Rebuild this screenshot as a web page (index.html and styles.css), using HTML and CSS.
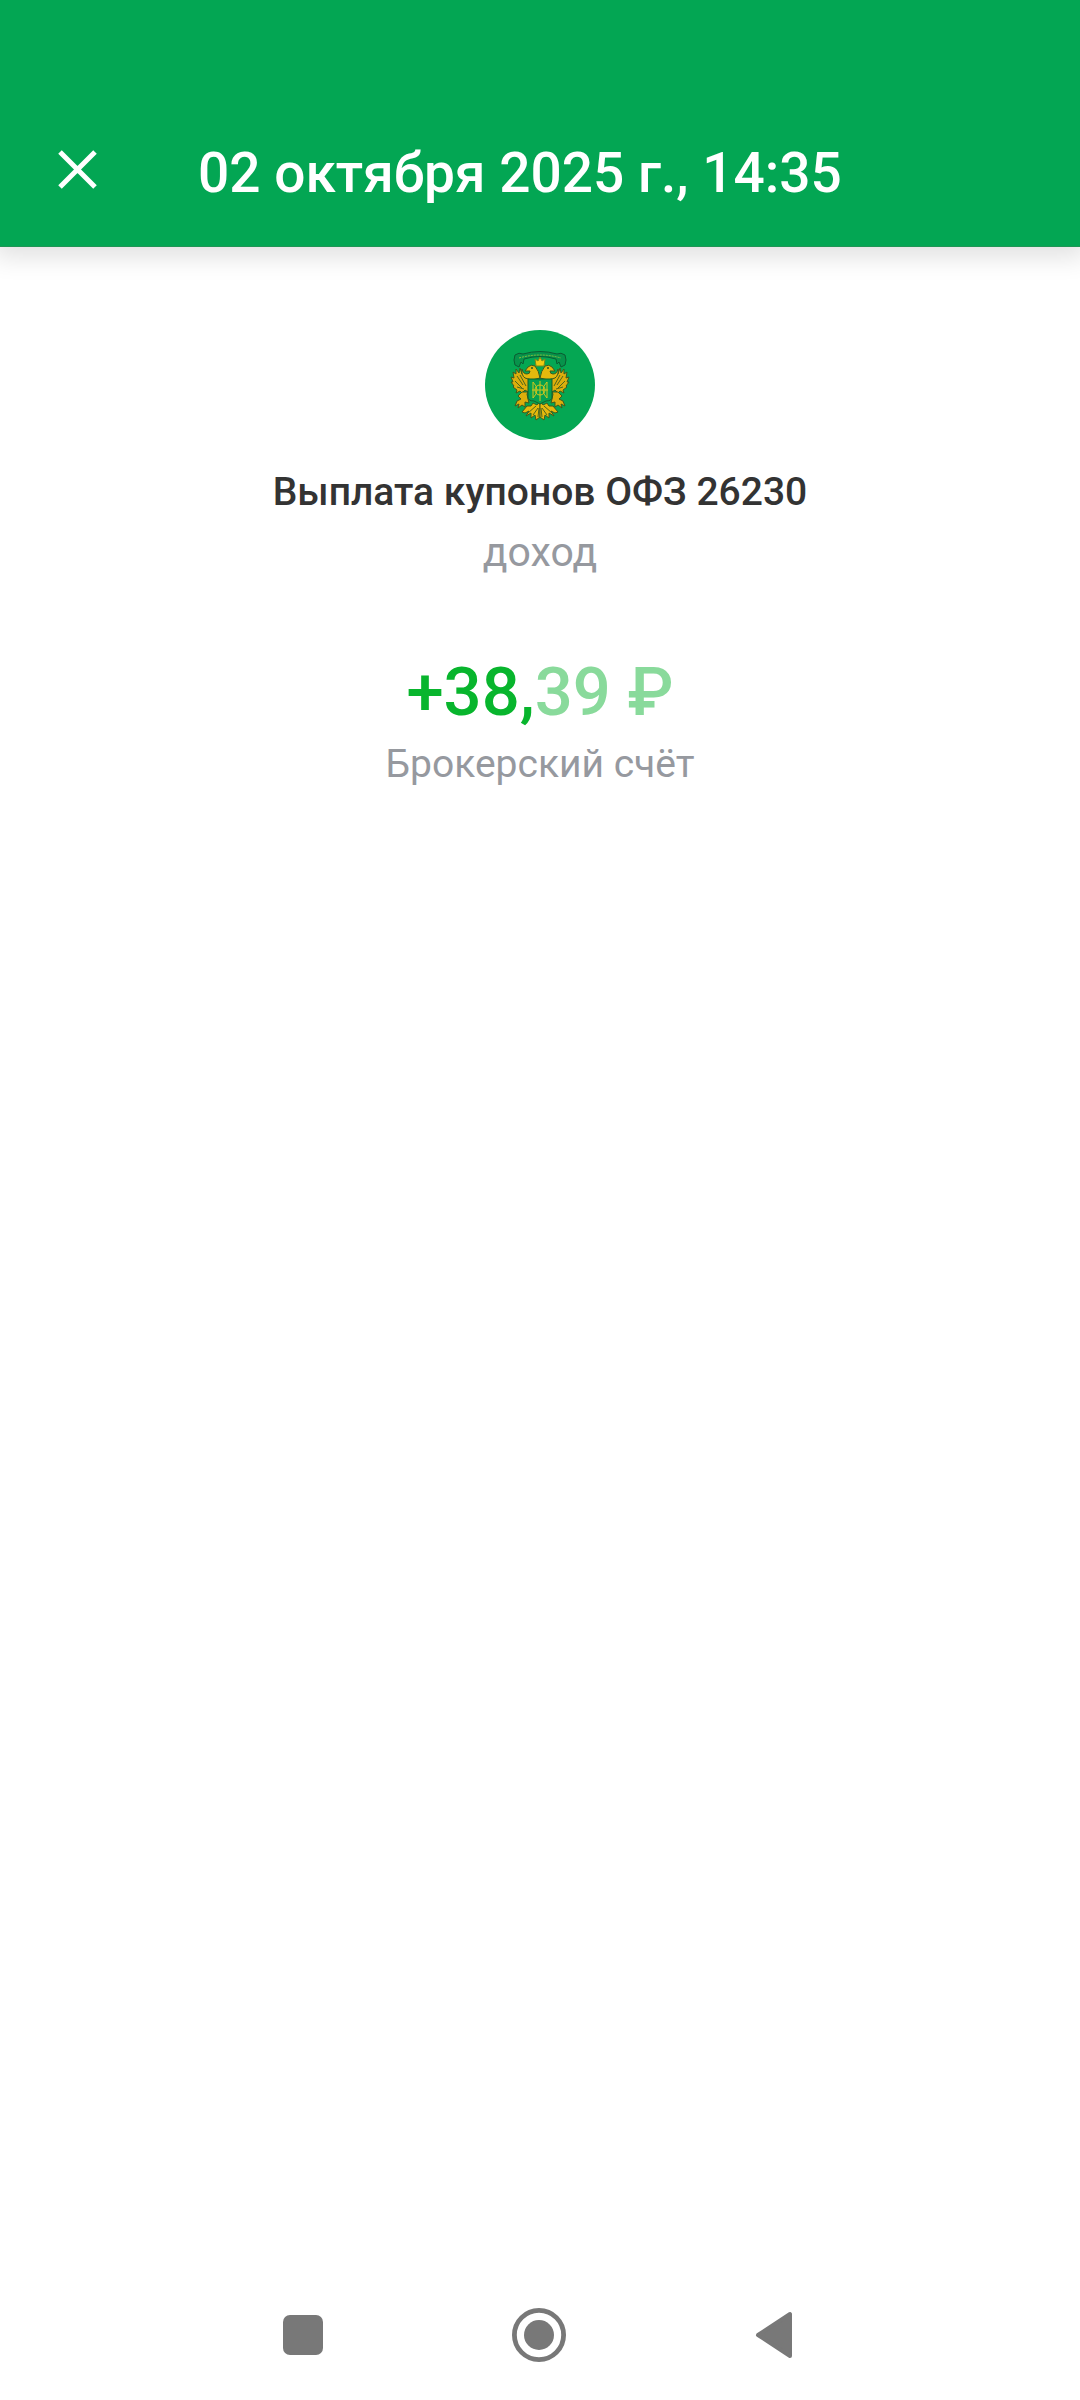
FILE: index.html
```
<!DOCTYPE html>
<html lang="ru">
<head>
    <meta charset="UTF-8">
    <meta name="viewport" content="width=device-width, initial-scale=1.0">
    <title>Выплата купонов ОФЗ 26230</title>
    <link rel="stylesheet" href="styles.css">
</head>
<body>
    <header class="header">
        <button type="button" class="close" aria-label="Закрыть">
            <svg width="40" height="40" viewBox="0 0 40 40">
                <path d="M2 2L37 37M37 2L2 37" stroke="#fff" stroke-width="5" fill="none"/>
            </svg>
        </button>
        <h1>02 октября 2025 г., 14:35</h1>
    </header>

    <main class="operation">
        <!-- логотип эмитента -->
        <svg class="logo" width="110" height="110" viewBox="0 0 110 110">
            <circle cx="55" cy="55" r="55" fill="#05a753"/>
            <!-- лента -->
            <path d="M30 25Q34 22 38 24Q55 19 72 24Q76 22 80 25Q82 30 80 35L76 37L74 32L72 34L71 29Q55 24 39 29L38 34L36 32L34 37L30 35Q28 30 30 25Z" fill="#07934b" stroke="#0b5c32" stroke-width="1"/>
            <path d="M34 28Q55 22 76 28" fill="none" stroke="#8ebd3c" stroke-width="1" stroke-dasharray="2 1"/>
            <g id="half">
                <!-- крыло -->
                <path d="M45 48Q40 47 37 44L35 38L34 43L31 39L31 44L28 42L29 48L26 47L28 52L26 52L29 56L28 57L32 60L31 63L35 61L37 63L40 60L43 62L46 56Z" fill="#dcae0c" stroke="#3f5a1d" stroke-width="1"/>
                <path d="M32 46L38 55M30 51L37 58M35 45L41 56M32 57L39 59" stroke="#4d671c" stroke-width="1" fill="none"/>
                <!-- голова -->
                <path d="M55 48Q54 41 50 36Q46 34 43 37L40 41L45 41Q45 44 42 44Q38 44 37 39Q36 45 40 48L47 50Z" fill="#e5b90d" stroke="#3f5a1d" stroke-width="1"/>
                <circle cx="47" cy="38" r="1" fill="#2b5520"/>
                <!-- лапа -->
                <path d="M37 62L33 66L36 69L32 71L30 76L34 74L33 78L37 75L40 77L40 72L44 73L43 69L42 64L43 62Z" fill="#dcae0c" stroke="#3f5a1d" stroke-width="1"/>
                <!-- хвост -->
                <path d="M55 71L52 75L48 73L46 76L42 76L37 82L40 83L44 81L41 86L46 83L46 88L50 85L51 90L55 87Z" fill="#e5b90d" stroke="#3f5a1d" stroke-width="1"/>
                <path d="M51 76L43 83M53 78L48 85M54 78L53 87" stroke="#4d671c" stroke-width="1" fill="none"/>
            </g>
            <use href="#half" transform="translate(110 0) scale(-1 1)"/>
            <path d="M51 36L50 29L53 31L55 27L57 31L60 29L59 36Z" fill="#f1cb12" stroke="#7b8916" stroke-width="1"/>
            <!-- щит -->
            <path d="M43 49H67V67Q67 71 61 71L55 74L49 71Q43 71 43 67Z" fill="#05a04f" stroke="#155f2b" stroke-width="1"/>
            <path d="M48 52V68M62 52V68M48 52Q56 60 48 68M62 52Q54 60 62 68M55 51V71M47 60H63" fill="none" stroke="#d3c81c" stroke-width="1"/>
            <circle cx="55" cy="60" r="5" fill="none" stroke="#d3c81c" stroke-width="1"/>
        </svg>
        <h2>Выплата купонов ОФЗ 26230</h2>
        <p class="type">доход</p>
        <p class="amount">+38,<span>39 ₽</span></p>
        <p class="account">Брокерский счёт</p>
    </main>

    <nav class="navbar">
        <button type="button" aria-label="Недавние">
            <svg width="54" height="54" viewBox="0 0 54 54"><rect x="7" y="7" width="40" height="40" rx="7"/></svg>
        </button>
        <button type="button" aria-label="Домой">
            <svg width="54" height="54" viewBox="0 0 54 54">
                <circle cx="27" cy="27" r="24.6" fill="none" stroke="#787878" stroke-width="4.8"/>
                <circle cx="27" cy="27" r="15"/>
            </svg>
        </button>
        <button type="button" aria-label="Назад">
            <svg width="54" height="54" viewBox="0 0 54 54"><path d="M10 27L42 6V48Z" stroke="#787878" stroke-width="4" stroke-linejoin="round"/></svg>
        </button>
    </nav>
</body>
</html>
```
FILE: styles.css
```
* {
    box-sizing: border-box;
}
body {
    font-family: Roboto, "Noto Sans", sans-serif;
    background-color: #fff;
    margin: 0;
    min-height: 100vh;
    display: flex;
    flex-direction: column;
    overflow-x: hidden;
}
button {
    background: none;
    border: none;
    padding: 0;
    cursor: pointer;
}
svg {
    display: block;
}
h1, h2, p {
    margin: 0;
    font-weight: 400;
}
.header {
    display: flex;
    align-items: center;
    gap: 100px;
    padding: 100px 58px 0;
    background-color: #03a653;
    border-bottom: 1px solid #1f9555;
    box-shadow: 0 4px 24px 6px rgba(0, 0, 0, 0.12);
}
.close {
    padding-bottom: 6px;
}
.header h1 {
    color: #fff;
    font-size: 55px;
    font-weight: 500;
    line-height: 146px;
}
.operation {
    flex: 1;
    display: flex;
    flex-direction: column;
    align-items: center;
    padding-top: 83px;
    text-align: center;
}
.operation h2 {
    margin-top: 24px;
    color: #333;
    font-size: 39px;
    font-weight: 500;
    line-height: 56px;
}
.type,
.account {
    color: #96999f;
    line-height: 56px;
}
.type {
    margin-top: 4px;
    font-size: 41px;
}
.amount {
    margin-top: 72px;
    color: #08b52d;
    font-size: 67px;
    font-weight: 500;
    line-height: 80px;
}
.amount span {
    color: #89da9b;
}
.account {
    margin-top: 4px;
    font-size: 39px;
}
.navbar {
    display: flex;
    justify-content: center;
    gap: 182px;
    padding: 0 2px 38px 0;
    fill: #787878;
}
```
